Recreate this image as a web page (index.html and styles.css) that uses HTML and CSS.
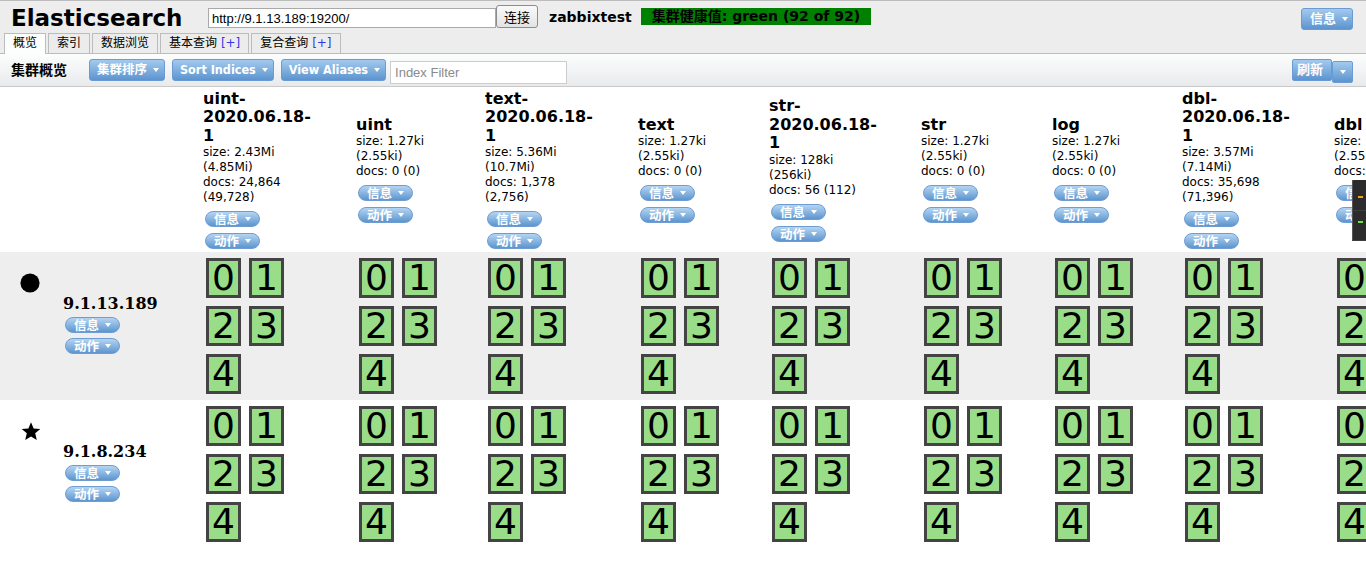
FILE: index.html
```html
<!DOCTYPE html>
<html lang="zh">
<head>
<meta charset="utf-8">
<title>Elasticsearch</title>
<link rel="stylesheet" href="styles.css">
</head>
<body>
<div class="page">
  <header class="top">
    <div class="topbar">
      <h1 class="brand">Elasticsearch</h1>
      <input class="url" type="text" value="http://9.1.13.189:19200/">
      <button class="connect">连接</button>
      <span class="cluster-name">zabbixtest</span>
      <span class="health">集群健康值: green (92 of 92)</span>
      <button class="btn btn-top">信息<i class="caret"></i></button>
    </div>
    <nav class="tabs">
      <span class="tab active">概览</span>
      <span class="tab">索引</span>
      <span class="tab">数据浏览</span>
      <span class="tab">基本查询 <span class="plus">[+]</span></span>
      <span class="tab">复合查询 <span class="plus">[+]</span></span>
    </nav>
  </header>

  <div class="toolbar">
    <span class="tb-title">集群概览</span>
    <button class="btn btn-sort">集群排序<i class="caret"></i></button>
    <button class="btn">Sort Indices<i class="caret"></i></button>
    <button class="btn">View Aliases<i class="caret"></i></button>
    <input class="filter" type="text" placeholder="Index Filter">
    <div class="tb-right">
      <button class="btn btn-refresh">刷新</button>
      <button class="btn btn-drop"><i class="caret"></i></button>
    </div>
  </div>

  <div class="overview">
    <div class="row head">
      <div class="cell-empty"></div>
      <div class="idx">
        <div class="idx-name">uint-<wbr>2020.06.18-<wbr>1</div>
        <div class="stats"><div>size: 2.43Mi (4.85Mi)</div><div>docs: 24,864 (49,728)</div></div>
        <div class="menus"><span class="pill">信息<i class="caret"></i></span><span class="pill">动作<i class="caret"></i></span></div>
      </div>
      <div class="idx">
        <div class="idx-name">uint</div>
        <div class="stats"><div>size: 1.27ki (2.55ki)</div><div>docs: 0 (0)</div></div>
        <div class="menus"><span class="pill">信息<i class="caret"></i></span><span class="pill">动作<i class="caret"></i></span></div>
      </div>
      <div class="idx">
        <div class="idx-name">text-<wbr>2020.06.18-<wbr>1</div>
        <div class="stats"><div>size: 5.36Mi (10.7Mi)</div><div>docs: 1,378 (2,756)</div></div>
        <div class="menus"><span class="pill">信息<i class="caret"></i></span><span class="pill">动作<i class="caret"></i></span></div>
      </div>
      <div class="idx">
        <div class="idx-name">text</div>
        <div class="stats"><div>size: 1.27ki (2.55ki)</div><div>docs: 0 (0)</div></div>
        <div class="menus"><span class="pill">信息<i class="caret"></i></span><span class="pill">动作<i class="caret"></i></span></div>
      </div>
      <div class="idx">
        <div class="idx-name">str-<wbr>2020.06.18-<wbr>1</div>
        <div class="stats"><div>size: 128ki (256ki)</div><div>docs: 56 (112)</div></div>
        <div class="menus"><span class="pill">信息<i class="caret"></i></span><span class="pill">动作<i class="caret"></i></span></div>
      </div>
      <div class="idx">
        <div class="idx-name">str</div>
        <div class="stats"><div>size: 1.27ki (2.55ki)</div><div>docs: 0 (0)</div></div>
        <div class="menus"><span class="pill">信息<i class="caret"></i></span><span class="pill">动作<i class="caret"></i></span></div>
      </div>
      <div class="idx">
        <div class="idx-name">log</div>
        <div class="stats"><div>size: 1.27ki (2.55ki)</div><div>docs: 0 (0)</div></div>
        <div class="menus"><span class="pill">信息<i class="caret"></i></span><span class="pill">动作<i class="caret"></i></span></div>
      </div>
      <div class="idx">
        <div class="idx-name">dbl-<wbr>2020.06.18-<wbr>1</div>
        <div class="stats"><div>size: 3.57Mi (7.14Mi)</div><div>docs: 35,698 (71,396)</div></div>
        <div class="menus"><span class="pill">信息<i class="caret"></i></span><span class="pill">动作<i class="caret"></i></span></div>
      </div>
      <div class="idx">
        <div class="idx-name">dbl</div>
        <div class="stats"><div>size: 1.27ki (2.55ki)</div><div>docs: 0 (0)</div></div>
        <div class="menus"><span class="pill">信息<i class="caret"></i></span><span class="pill">动作<i class="caret"></i></span></div>
      </div>
    </div>

    <div class="row node-row alt">
      <div class="node">
        <span class="node-icon"><svg viewBox="0 0 20 20" width="20" height="20"><circle cx="10" cy="10" r="9.6" fill="#000"/></svg></span>
        <div class="node-info">
          <div class="node-name">9.1.13.189</div>
          <div class="menus node-menus"><span class="pill">信息<i class="caret"></i></span><span class="pill">动作<i class="caret"></i></span></div>
        </div>
      </div>
      <div class="shards-cell"><div class="shards"><span class="shard">0</span><span class="shard">1</span><span class="shard">2</span><span class="shard">3</span><span class="shard">4</span></div></div>
      <div class="shards-cell"><div class="shards"><span class="shard">0</span><span class="shard">1</span><span class="shard">2</span><span class="shard">3</span><span class="shard">4</span></div></div>
      <div class="shards-cell"><div class="shards"><span class="shard">0</span><span class="shard">1</span><span class="shard">2</span><span class="shard">3</span><span class="shard">4</span></div></div>
      <div class="shards-cell"><div class="shards"><span class="shard">0</span><span class="shard">1</span><span class="shard">2</span><span class="shard">3</span><span class="shard">4</span></div></div>
      <div class="shards-cell"><div class="shards"><span class="shard">0</span><span class="shard">1</span><span class="shard">2</span><span class="shard">3</span><span class="shard">4</span></div></div>
      <div class="shards-cell"><div class="shards"><span class="shard">0</span><span class="shard">1</span><span class="shard">2</span><span class="shard">3</span><span class="shard">4</span></div></div>
      <div class="shards-cell"><div class="shards"><span class="shard">0</span><span class="shard">1</span><span class="shard">2</span><span class="shard">3</span><span class="shard">4</span></div></div>
      <div class="shards-cell"><div class="shards"><span class="shard">0</span><span class="shard">1</span><span class="shard">2</span><span class="shard">3</span><span class="shard">4</span></div></div>
      <div class="shards-cell"><div class="shards"><span class="shard">0</span><span class="shard">1</span><span class="shard">2</span><span class="shard">3</span><span class="shard">4</span></div></div>
    </div>

    <div class="row node-row">
      <div class="node">
        <span class="node-icon star"><svg viewBox="0 0 24 24" width="22" height="21"><polygon points="12,1.5 15,8.6 22.6,9.2 16.8,14.1 18.6,21.6 12,17.6 5.4,21.6 7.2,14.1 1.4,9.2 9,8.6" fill="#000"/></svg></span>
        <div class="node-info">
          <div class="node-name">9.1.8.234</div>
          <div class="menus node-menus"><span class="pill">信息<i class="caret"></i></span><span class="pill">动作<i class="caret"></i></span></div>
        </div>
      </div>
      <div class="shards-cell"><div class="shards"><span class="shard">0</span><span class="shard">1</span><span class="shard">2</span><span class="shard">3</span><span class="shard">4</span></div></div>
      <div class="shards-cell"><div class="shards"><span class="shard">0</span><span class="shard">1</span><span class="shard">2</span><span class="shard">3</span><span class="shard">4</span></div></div>
      <div class="shards-cell"><div class="shards"><span class="shard">0</span><span class="shard">1</span><span class="shard">2</span><span class="shard">3</span><span class="shard">4</span></div></div>
      <div class="shards-cell"><div class="shards"><span class="shard">0</span><span class="shard">1</span><span class="shard">2</span><span class="shard">3</span><span class="shard">4</span></div></div>
      <div class="shards-cell"><div class="shards"><span class="shard">0</span><span class="shard">1</span><span class="shard">2</span><span class="shard">3</span><span class="shard">4</span></div></div>
      <div class="shards-cell"><div class="shards"><span class="shard">0</span><span class="shard">1</span><span class="shard">2</span><span class="shard">3</span><span class="shard">4</span></div></div>
      <div class="shards-cell"><div class="shards"><span class="shard">0</span><span class="shard">1</span><span class="shard">2</span><span class="shard">3</span><span class="shard">4</span></div></div>
      <div class="shards-cell"><div class="shards"><span class="shard">0</span><span class="shard">1</span><span class="shard">2</span><span class="shard">3</span><span class="shard">4</span></div></div>
      <div class="shards-cell"><div class="shards"><span class="shard">0</span><span class="shard">1</span><span class="shard">2</span><span class="shard">3</span><span class="shard">4</span></div></div>
    </div>
  </div>

  <div class="monitor">
    <div class="mon-seg"><i class="mon-bar orange"></i></div>
    <div class="mon-seg"><i class="mon-bar green"></i></div>
  </div>
</div>
</body>
</html>
```

FILE: styles.css
```css
html, body {
  margin: 0;
  padding: 0;
  overflow: hidden;
  background: #fff;
}

body {
  font-family: "DejaVu Sans", "Noto Sans CJK SC", sans-serif;
  font-size: 12px;
  color: #000;
}

.page {
  width: 1366px;
  height: 582px;
  overflow: hidden;
  position: relative;
}

/* ---------- header ---------- */
.top {
  background: #ededed;
  border-top: 1px solid #bcbcbc;
  border-bottom: 1px solid #bcbcbc;
}

.topbar {
  height: 32px;
  display: flex;
  align-items: flex-start;
}

.brand {
  margin: 4px 0 0 11px;
  flex: 0 0 197px;
  font: bold 23px/26px "DejaVu Sans", sans-serif;
  color: #000;
}

.url {
  margin: 7px 0 0 0;
  width: 288px;
  height: 20px;
  box-sizing: border-box;
  border: 1px solid #a9a9a9;
  padding: 0 3px;
  font: 13px/18px "Liberation Sans", sans-serif;
  color: #000;
  background: #fff;
  outline: none;
}

.connect {
  margin: 4px 0 0 0;
  width: 42px;
  height: 23px;
  box-sizing: border-box;
  border: 1px solid #8c8c8c;
  border-radius: 3px;
  background: linear-gradient(#f9f9f9, #e3e3e3);
  font: 13px/20px "Noto Sans CJK SC", sans-serif;
  color: #000;
  padding: 0;
}

.cluster-name {
  margin: 8px 0 0 11px;
  font: bold 14px/17px "DejaVu Sans", sans-serif;
}

.health {
  margin: 7px 0 0 9px;
  height: 17px;
  padding: 0 11px;
  background: #008000;
  color: #000;
  font: bold 14px/17px "DejaVu Sans", "Noto Sans CJK SC", sans-serif;
}

/* ---------- blue buttons ---------- */
.btn {
  display: inline-flex;
  align-items: center;
  height: 22px;
  box-sizing: border-box;
  padding: 0 5px 0 7px;
  border: 1px solid #6b9bd2;
  border-radius: 3px;
  background: linear-gradient(#a3caee, #5c94cf);
  color: #fff;
  font: bold 12.5px/20px "DejaVu Sans Condensed", "DejaVu Sans", "Noto Sans CJK SC", sans-serif;
  font-stretch: condensed;
  white-space: nowrap;
  cursor: pointer;
}

.btn .caret {
  margin-left: 6px;
}

.caret {
  display: inline-block;
  flex: 0 0 auto;
  width: 0;
  height: 0;
  border-left: 3px solid transparent;
  border-right: 3px solid transparent;
  border-top: 4px solid #fff;
}

.btn-top {
  margin: 7px 13px 0 auto;
  width: 52px;
  padding: 0 0 0 8px;
  font-size: 13px;
}

/* ---------- tabs ---------- */
.tabs {
  display: flex;
  gap: 2px;
  height: 20px;
  padding-left: 4px;
  align-items: flex-start;
}

.tab {
  height: 20px;
  box-sizing: border-box;
  border: 1px solid #bcbcbc;
  border-bottom: none;
  padding: 0 8px;
  background: #ececec;
  font: 12px/19px "DejaVu Sans", "Noto Sans CJK SC", sans-serif;
  color: #000;
  white-space: nowrap;
}

.tab.active {
  height: 21px;
  margin-bottom: -1px;
  background: #fcfdfd;
  position: relative;
}

.plus {
  color: #3434f0;
}

/* ---------- toolbar ---------- */
.toolbar {
  height: 33px;
  box-sizing: border-box;
  border-bottom: 1px solid #c9c9c9;
  background: linear-gradient(#fcfdfd, #e8eaec);
  display: flex;
  align-items: flex-start;
  padding: 0 13px 0 11px;
}

.tb-title {
  margin-top: 5px;
  font: bold 14px/20px "Noto Sans CJK SC", sans-serif;
}

.toolbar .btn {
  margin-top: 5px;
  margin-left: 7px;
}

.toolbar .btn-sort {
  margin-left: 22px;
}

.filter {
  margin: 7px 0 0 4px;
  width: 177px;
  height: 23px;
  box-sizing: border-box;
  border: 1px solid #cccccc;
  padding: 0 4px;
  font: 13px/21px "Liberation Sans", sans-serif;
  background: #fff;
  outline: none;
}

.filter::placeholder {
  color: #8a8a8a;
}

.tb-right {
  margin-left: auto;
  display: flex;
  align-items: flex-start;
}

.toolbar .btn-refresh {
  margin-left: 0;
  width: 40px;
  padding: 0 0 0 4px;
  font-size: 13px;
  border-radius: 2px;
}

.toolbar .btn-drop {
  margin: 7px 0 0 0;
  width: 21px;
  padding: 0 0 0 7px;
  border-radius: 2px;
}

.btn-drop .caret {
  margin-left: 0;
}

/* ---------- overview grid ---------- */
.row {
  display: grid;
  grid-template-columns: 200px 153px 129px 153px 131px 152px 131px 130px 152px 200px;
}

.head {
  height: 165px;
  align-items: center;
}

.idx {
  padding-left: 3px;
}

.idx-name {
  width: 100px;
  font: bold 16px/18.5px "DejaVu Sans", sans-serif;
}

.stats {
  width: 100px;
  font: 12px/15px "DejaVu Sans", sans-serif;
}

.menus {
  display: flex;
  flex-direction: column;
  align-items: flex-start;
  gap: 6px;
  margin: 6px 0 0 2px;
}

.pill {
  display: flex;
  align-items: flex-start;
  width: 55px;
  height: 16px;
  box-sizing: border-box;
  padding-left: 8px;
  border: 1px solid #6d9dd3;
  border-radius: 8px;
  background: linear-gradient(#b4d5f2, #5d95cf);
  color: #fff;
  font: bold 12.5px/14px "Noto Sans CJK SC", sans-serif;
  white-space: nowrap;
}

.pill .caret {
  margin: 5px 0 0 6px;
}

.node-row {
  height: 148px;
  align-items: start;
}

.alt {
  background: #eeeeee;
}

.node {
  display: flex;
  align-items: flex-start;
  padding: 21px 0 0 20px;
}

.node-icon {
  display: block;
  width: 20px;
  height: 20px;
}

.node-icon svg {
  display: block;
}

.node-info {
  margin: 22px 0 0 23px;
}

.node-name {
  font: bold 16px/17px "DejaVu Serif", serif;
  white-space: nowrap;
}

.node-menus {
  gap: 5px;
  margin-top: 5px;
}

.shards-cell {
  padding: 6px 0 0 6px;
}

.shards {
  display: grid;
  grid-template-columns: 35px 35px;
  gap: 8px;
}

.shard {
  display: block;
  width: 35px;
  height: 40px;
  box-sizing: border-box;
  border: 3px solid #444444;
  background: #99dd88;
  text-align: center;
  font: 36px/34px "DejaVu Sans", sans-serif;
  color: #000;
}

/* ---------- desktop monitor widget overlay ---------- */
.monitor {
  position: absolute;
  left: 1352px;
  top: 180px;
  width: 16px;
  height: 61px;
  background: #2c2c2c;
  border-radius: 2px 0 0 2px;
  display: flex;
  flex-direction: column;
}

.mon-seg {
  flex: 1;
  border-left: 1px solid #555;
  border-bottom: 1px solid #3e3e3e;
  position: relative;
}

.mon-bar {
  position: absolute;
  left: 5px;
  top: 16px;
  width: 5px;
  height: 2px;
}

.mon-bar.orange { background: #f0a020; }
.mon-bar.green { background: #70e040; top: 10px; }
```
